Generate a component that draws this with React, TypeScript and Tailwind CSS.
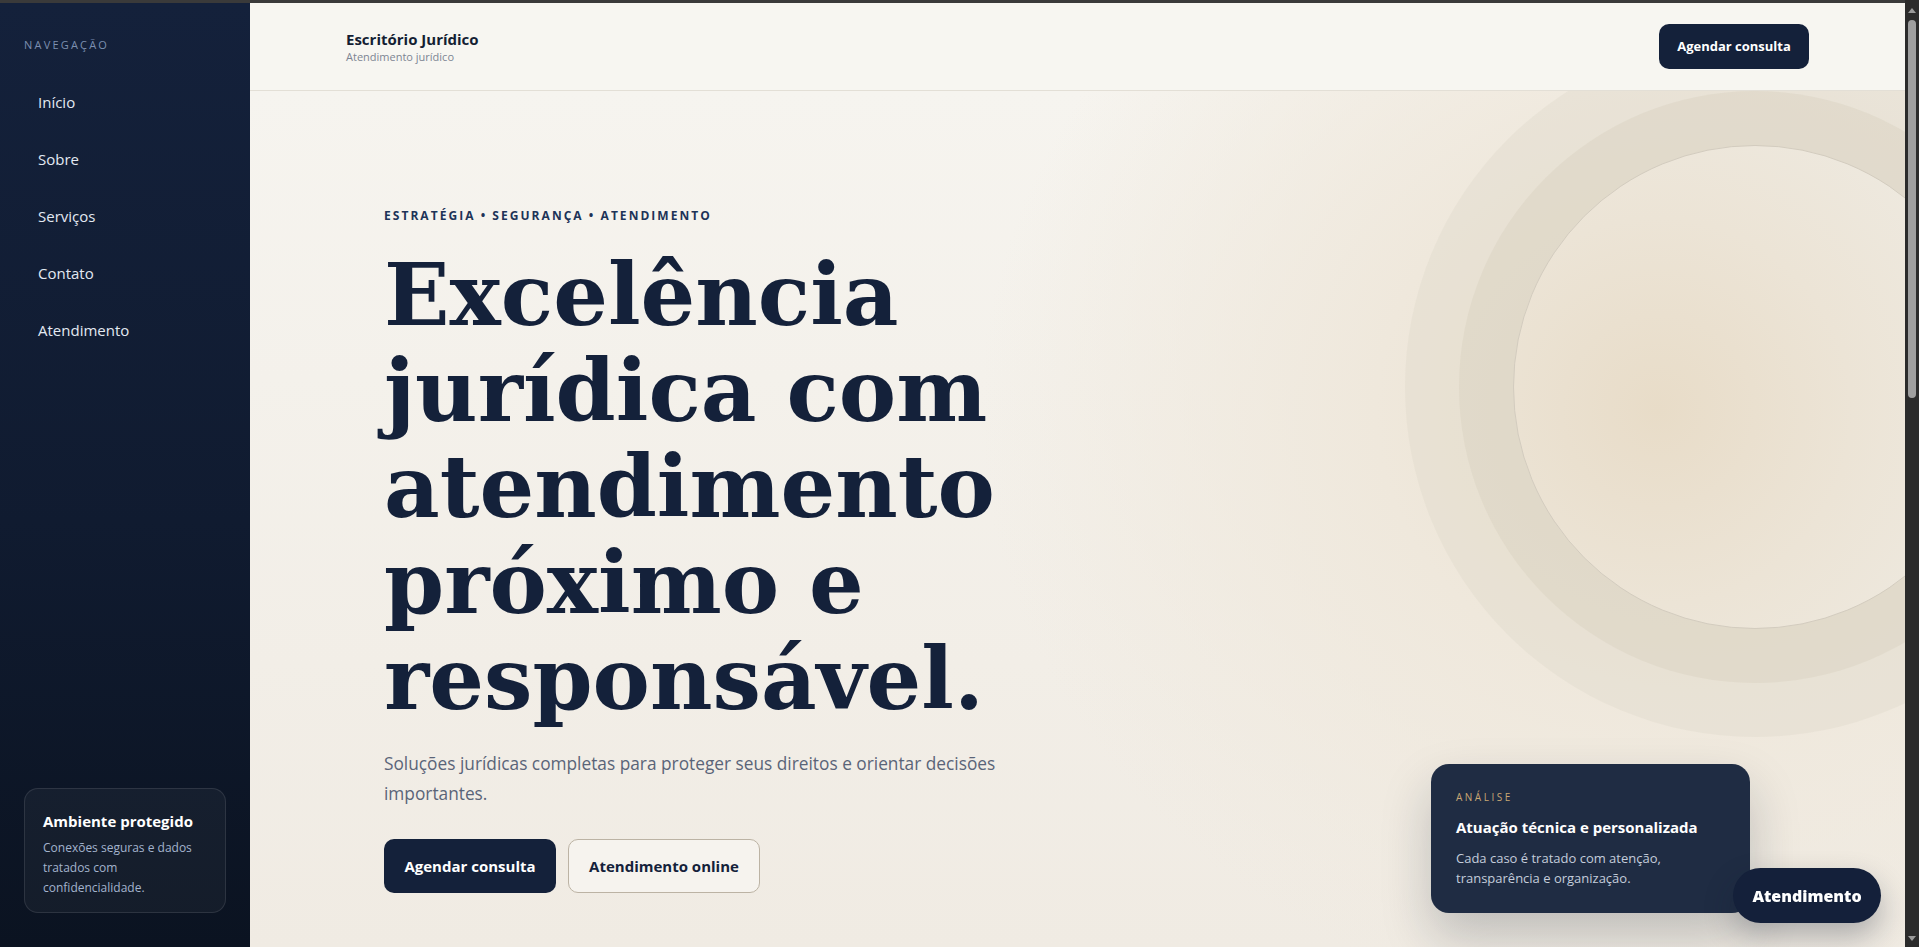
const navItems = ["Início", "Sobre", "Serviços", "Contato", "Atendimento"];

function Sidebar() {
  return (
    <aside className="flex h-[944px] w-[250px] shrink-0 flex-col justify-between bg-[linear-gradient(180deg,#14213b_0%,#101b30_55%,#0b1321_100%)] px-6 pt-[34px] pb-[34px]">
      <div>
        <p className="text-[11px] leading-4 uppercase tracking-[0.2em] text-[#7c8fb0]">Navegação</p>
        <nav className="mt-[21px] flex flex-col gap-px">
          {navItems.map((item) => (
            <a key={item} href="#" className="rounded-lg px-3.5 py-4 text-[15px] leading-6 text-[#e3e9f2]">
              {item}
            </a>
          ))}
        </nav>
      </div>
      <div className="rounded-[14px] border border-white/10 bg-white/[0.04] px-[18px] pt-5 pb-3.5">
        <p className="text-[15px] font-bold leading-6 text-white">Ambiente protegido</p>
        <p className="mt-[5px] text-[12px] leading-5 text-[#a3b3cd]">
          Conexões seguras e dados tratados com confidencialidade.
        </p>
      </div>
    </aside>
  );
}

function Header() {
  return (
    <header className="relative z-20 flex h-[88px] items-center justify-between border-b border-[#e3dfd6] bg-[#f7f6f1] px-24">
      <div>
        <p className="text-[15px] font-bold leading-5 text-[#141e33]">Escritório Jurídico</p>
        <p className="text-[11px] leading-4 text-[#7d8593]">Atendimento jurídico</p>
      </div>
      <button className="h-[45px] w-[150px] rounded-[10px] bg-[#14213a] text-[13px] font-bold text-white">
        Agendar consulta
      </button>
    </header>
  );
}

function Hero() {
  return (
    <section className="relative h-[856px] overflow-hidden bg-[radial-gradient(ellipse_720px_620px_at_1450px_320px,#eadfcb_0%,#efe8dc_45%,rgba(245,243,238,0)_100%),linear-gradient(180deg,#f6f4ef_0%,#f0ebe3_100%)]">
      <div className="absolute left-[1155px] top-[-54px] h-[700px] w-[700px] rounded-full bg-[#ddd6c8]/35" />
      <div className="absolute left-[1209px] top-0 h-[592px] w-[592px] rounded-full bg-[#d6cfbf]/40" />
      <div className="absolute left-[1263px] top-[54px] h-[484px] w-[484px] rounded-full border border-[#d3ccbf] bg-[radial-gradient(circle_at_30%_55%,#e8dcc8_0%,#ece4d6_45%,#eee9df_80%)]" />

      <div className="relative pl-[134px] pt-[117px]">
        <p className="text-[12px] font-bold leading-4 uppercase tracking-[0.17em] text-[#1d3358]">
          Estratégia • Segurança • Atendimento
        </p>
        <h1 className="mt-[23px] font-['Georgia','DejaVu_Serif',serif] text-[86px] font-bold leading-[96px] text-[#14213a]">
          Excelência
          <br />
          jurídica com
          <br />
          atendimento
          <br />
          próximo e
          <br />
          responsável.
        </h1>
        <p className="mt-[22px] max-w-[640px] text-[17.3px] leading-[30px] text-[#5a6478]">
          Soluções jurídicas completas para proteger seus direitos e orientar decisões importantes.
        </p>
        <div className="mt-[30px] flex gap-3">
          <button className="h-[54px] w-[172px] rounded-[10px] bg-[#14213a] text-[15px] font-bold text-white">
            Agendar consulta
          </button>
          <button className="h-[54px] w-[192px] rounded-[10px] border border-[#bcb3a4] bg-[#f6f3ee] text-[15px] font-bold text-[#14213a]">
            Atendimento online
          </button>
        </div>
      </div>

      <div className="absolute left-[1181px] top-[673px] w-[319px] rounded-[18px] bg-[#1f2c43] px-[25px] pt-[25px] pb-[25px] shadow-[0_24px_50px_rgba(20,30,50,0.22)]">
        <p className="text-[10px] leading-4 uppercase tracking-[0.25em] text-[#c9a774]">Análise</p>
        <p className="mt-[11px] text-[15px] font-bold leading-[22px] text-white">Atuação técnica e personalizada</p>
        <p className="mt-[10px] text-[13px] leading-5 text-[#c4cddb]">
          Cada caso é tratado com atenção, transparência e organização.
        </p>
      </div>
    </section>
  );
}

function Scrollbar() {
  return (
    <div className="fixed right-0 top-0 z-40 flex h-screen w-[14px] flex-col items-center bg-[#2b2b2b] pt-[3px]">
      <div className="mt-[5px] h-0 w-0 border-x-[4px] border-b-[5px] border-x-transparent border-b-[#9a9a9a]" />
      <div className="mt-[7px] h-[378px] w-[8px] rounded-full bg-[#9f9f9f]" />
      <div className="mt-auto mb-[6px] h-0 w-0 border-x-[4px] border-t-[5px] border-x-transparent border-t-[#9a9a9a]" />
    </div>
  );
}

export default function App() {
  return (
    <div className="h-screen overflow-hidden bg-[#f5f3ee] pr-[14px] font-['Segoe_UI','Open_Sans',sans-serif] text-[#14213a]">
      <div className="h-[3px] bg-[#3a3a3a]" />
      <div className="flex">
        <Sidebar />
        <div className="min-w-0 flex-1">
          <Header />
          <main>
            <Hero />
          </main>
        </div>
      </div>
      <button className="fixed bottom-6 right-[38px] z-30 h-[55px] w-[148px] rounded-full bg-[#14203a] text-[16px] font-extrabold text-white shadow-[0_14px_30px_rgba(20,30,50,0.3)]">
        Atendimento
      </button>
      <Scrollbar />
    </div>
  );
}
